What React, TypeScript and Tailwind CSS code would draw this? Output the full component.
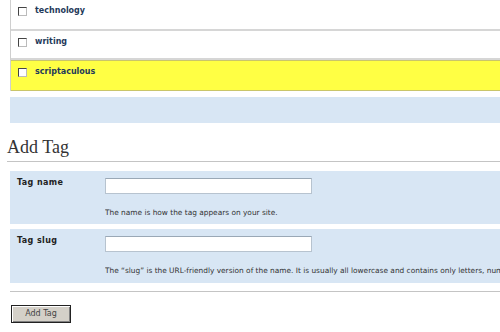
import React from "react";

const Check = () => (
  <span className="inline-block w-[9px] h-[9px] bg-white border border-t-[#444] border-l-[#444] border-b-[#bbb] border-r-[#bbb] shrink-0" />
);

const Row = ({ label, yellow, h }: { label: string; yellow?: boolean; h: string }) => (
  <div
    className={
      (yellow
        ? "bg-[#ffff44] border-y border-[#c9c56a] "
        : "bg-white border-b-2 border-[#d6d6d6] ") +
      h +
      " flex items-start pl-[7px]"
    }
  >
    <div className="flex items-center gap-[8px] pt-[6px]">
      <Check />
      <span className="text-[8px] font-bold text-[#1f3a5a] leading-[10px]">{label}</span>
    </div>
  </div>
);

const Field = ({ label, desc, h }: { label: string; desc: string; h: string }) => (
  <div className={"ml-[10px] bg-[#d8e6f4] grid grid-cols-[95px_1fr] pt-[7px] " + h}>
    <div className="pl-[7px] text-[8px] font-bold tracking-[0.4px] text-[#222] leading-[10px]">
      {label}
    </div>
    <div className="flex flex-col overflow-hidden">
      <div className="w-[207px] h-[16px] bg-white border border-[#b7c3cf] border-t-[#9aa8b6]" />
      <div className="mt-[14px] text-[7.4px] leading-[9px] text-[#333] whitespace-nowrap">{desc}</div>
    </div>
  </div>
);

export default function App() {
  return (
    <div
      className="w-[500px] h-[332px] overflow-hidden bg-white"
      style={{ fontFamily: '"DejaVu Sans", Verdana, sans-serif' }}
    >
      <div className="ml-[10px] border-l border-[#cfcfcf]">
        <div className="bg-white border-b-2 border-[#d6d6d6] h-[31px] flex items-start pl-[7px]">
          <div className="flex items-center gap-[8px] pt-[6px]">
            <Check />
            <span className="text-[8px] font-bold text-[#1f3a5a] leading-[10px]">technology</span>
          </div>
        </div>
        <Row label="writing" h="h-[29px]" />
        <Row label="scriptaculous" yellow h="h-[31px]" />
      </div>
      <div className="ml-[10px] mt-[6px] h-[26px] bg-[#d8e6f4]" />
      <div className="ml-[7px] mt-[14px] border-b border-[#c4c4c4] pb-[3px]">
        <div
          className="text-[18px] leading-[21px] text-[#333]"
          style={{ fontFamily: '"Liberation Serif", "Times New Roman", serif' }}
        >
          Add Tag
        </div>
      </div>
      <div className="mt-[9px]">
        <Field label="Tag name" desc="The name is how the tag appears on your site." h="h-[53px]" />
        <div className="h-[5px]" />
        <Field
          label="Tag slug"
          desc={'The \u201cslug\u201d is the URL-friendly version of the name. It is usually all lowercase and contains only letters, numbers, and hyphens.'}
          h="h-[54px]"
        />
      </div>
      <div className="ml-[10px] mt-[8px] border-t border-[#c4c4c4]" />
      <div className="ml-[11px] mt-[13px]">
        <button className="w-[60px] h-[18px] bg-[#d4d0c8] border border-[#222] shadow-[inset_1px_1px_0_#fff,inset_-1px_-1px_0_#808080] text-[8px] text-[#444] leading-[10px] flex items-center justify-center">
          Add Tag
        </button>
      </div>
    </div>
  );
}
